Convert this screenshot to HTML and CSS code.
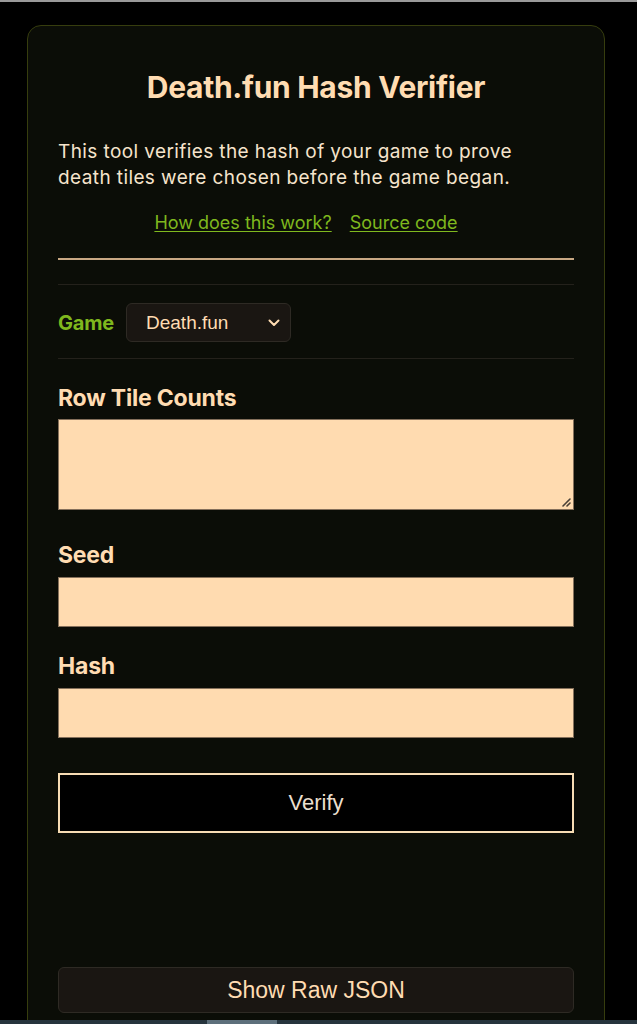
FILE: index.html
```html
<!DOCTYPE html>
<html lang="en">
<head>
<meta charset="utf-8">
<title>Death.fun Hash Verifier</title>
<link rel="stylesheet" href="styles.css">
</head>
<body>
<div class="topline"></div>
<main class="card">
  <h1 class="title">Death.fun Hash Verifier</h1>
  <p class="intro">This tool verifies the hash of your game to prove death tiles were chosen before the game began.</p>
  <div class="links">
    <a href="#">How does this work?</a>
    <a href="#">Source code</a>
  </div>
  <hr class="rule">
  <div class="game-row">
    <span class="game-label">Game</span>
    <div class="select">
      <span>Death.fun</span>
      <svg class="chev" width="12" height="8" viewBox="0 0 12 8"><path d="M1.5 1.5 L6 6 L10.5 1.5" fill="none" stroke="#ffdcb2" stroke-width="2" stroke-linecap="round" stroke-linejoin="round"/></svg>
    </div>
  </div>
  <label class="field-label first">Row Tile Counts</label>
  <div class="textarea">
    <svg class="grip" width="10" height="10" viewBox="0 0 10 10"><path d="M9 2 L2 9 M9 6 L6 9" stroke="#4a4036" stroke-width="1.6" stroke-linecap="round"/></svg>
  </div>
  <label class="field-label seed">Seed</label>
  <div class="input"></div>
  <label class="field-label hash">Hash</label>
  <div class="input"></div>
  <button class="verify">Verify</button>
  <button class="raw">Show Raw JSON</button>
</main>
<div class="hscroll"><div class="thumb"></div></div>
</body>
</html>
```
FILE: styles.css
```css
html, body {
  margin: 0;
  padding: 0;
  background: #000;
}
body {
  height: 1024px;
  overflow: hidden;
  font-family: Inter, "Noto Sans", sans-serif;
  color: #ffdcb2;
}
.topline {
  height: 2px;
  background: #9a9a9a;
}
.card {
  box-sizing: border-box;
  margin: 23px 0 0 27px;
  width: 578px;
  min-height: 1020px;
  background: #0b0d07;
  border: 1px solid #363d0e;
  border-radius: 14px;
  padding: 0 30px;
  display: flex;
  flex-direction: column;
}
.title {
  margin: 43px 0 0;
  font-size: 30px;
  line-height: 36px;
  font-weight: 700;
  text-align: center;
  color: #ffdcb2;
  letter-spacing: -0.3px;
}
.intro {
  margin: 34px 0 0;
  max-width: 480px;
  font-size: 19px;
  line-height: 26px;
  color: #f6e4cc;
  letter-spacing: 0.4px;
}
.links {
  margin-top: 20px;
  padding-right: 20px;
  display: flex;
  justify-content: center;
  gap: 18px;
  font-size: 18px;
  line-height: 24px;
}
.links a {
  color: #7fb81e;
  text-decoration: underline;
  text-underline-offset: 2px;
}
.rule {
  margin: 23px 0 0;
  border: 0;
  height: 2px;
  background: #c9a884;
}
.game-row {
  margin-top: 24px;
  border-top: 1px solid #24211b;
  border-bottom: 1px solid #24211b;
  padding: 18px 0 16px;
  display: flex;
  align-items: center;
  gap: 12px;
}
.game-label {
  color: #7fb81e;
  font-weight: 700;
  font-size: 20px;
  letter-spacing: -0.2px;
}
.select {
  box-sizing: border-box;
  width: 165px;
  height: 39px;
  background: #1a1612;
  border: 1px solid #2e2a24;
  border-radius: 6px;
  display: flex;
  align-items: center;
  justify-content: space-between;
  padding: 0 10px 0 19px;
  font-family: "Liberation Sans", Arial, sans-serif;
  font-size: 19px;
  color: #ffdcb2;
}
.field-label {
  display: block;
  font-weight: 700;
  font-size: 23px;
  line-height: 28px;
  letter-spacing: -0.2px;
  color: #ffdcb2;
}
.field-label.first {
  margin-top: 25px;
}
.field-label.seed {
  margin-top: 31px;
}
.field-label.hash {
  margin-top: 25px;
}
.textarea {
  box-sizing: border-box;
  margin-top: 7px;
  height: 91px;
  background: #ffdbb0;
  border: 1px solid #85705b;
  position: relative;
}
.grip {
  position: absolute;
  right: 2px;
  bottom: 2px;
}
.field-label + .input {
  margin-top: 8px;
}
.input {
  box-sizing: border-box;
  height: 50px;
  background: #ffdbb0;
  border: 1px solid #85705b;
}
.verify {
  box-sizing: border-box;
  margin-top: 35px;
  height: 60px;
  width: 100%;
  background: #000;
  border: 2px solid #f7dcb4;
  color: #eadfce;
  font-family: "Liberation Sans", Arial, sans-serif;
  font-size: 22px;
}
.raw {
  box-sizing: border-box;
  margin-top: 134px;
  height: 46px;
  width: 100%;
  background: #1a1612;
  border: 1px solid #2e2a24;
  border-radius: 6px;
  color: #ffdcb2;
  font-family: "Liberation Sans", Arial, sans-serif;
  font-size: 23px;
}
.hscroll {
  position: fixed;
  left: 0;
  right: 0;
  bottom: 0;
  height: 4px;
  background: #26343d;
}
.thumb {
  position: absolute;
  left: 207px;
  width: 70px;
  top: 0;
  bottom: 0;
  background: #5d6f7b;
}
```
